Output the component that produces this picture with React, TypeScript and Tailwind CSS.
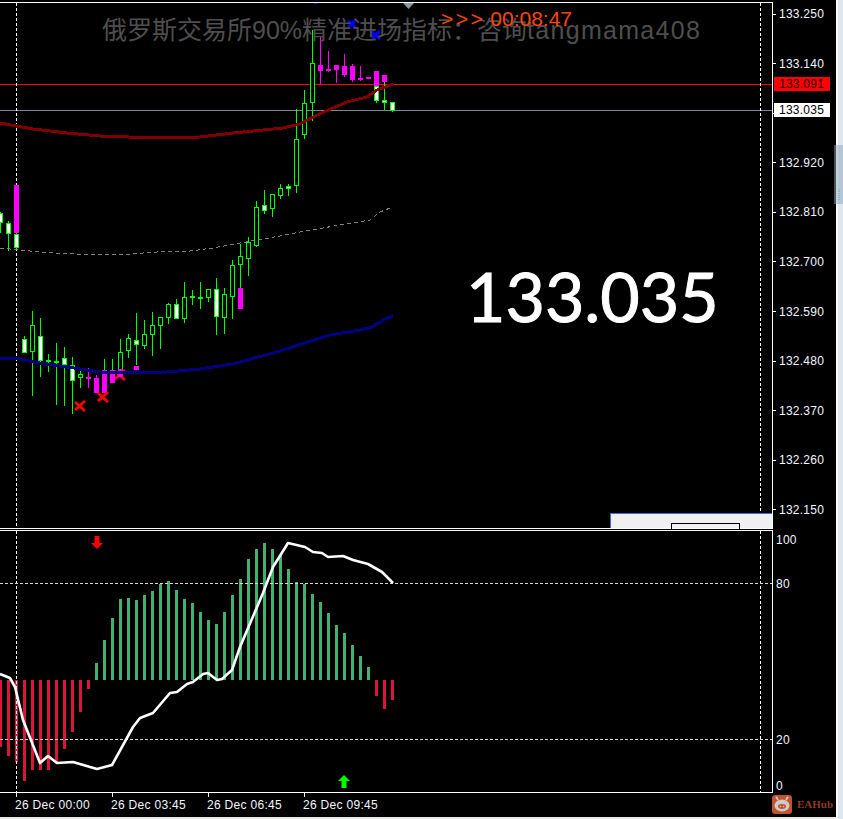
const GREEN = "#00ff00"
const MAGENTA = "#ff00ff"

type Kind = "g" | "w" | "d" | "m"
// k, high, body top, body bottom, low, kind
const candles: [number, number, number, number, number, Kind][] = [
  [0, 212, 213, 223, 233, "w"],
  [1, 221, 223, 234, 251, "w"],
  [2, 233, 234, 248, 249, "w"],
  [3, 336, 339, 353, 353, "w"],
  [4, 311, 325, 352, 396, "g"],
  [5, 318, 336, 361, 377, "w"],
  [6, 354, 360, 362, 372, "d"],
  [7, 343, 361, 363, 405, "d"],
  [8, 347, 358, 365, 406, "w"],
  [9, 357, 365, 381, 414, "w"],
  [10, 370, 374, 378, 388, "g"],
  [15, 339, 352, 370, 370, "g"],
  [16, 334, 338, 351, 358, "g"],
  [17, 313, 340, 345, 365, "w"],
  [18, 320, 334, 346, 349, "g"],
  [19, 312, 325, 335, 356, "g"],
  [20, 317, 317, 326, 349, "g"],
  [21, 303, 304, 318, 324, "g"],
  [22, 299, 304, 319, 319, "w"],
  [23, 282, 297, 319, 323, "g"],
  [24, 290, 296, 298, 305, "d"],
  [25, 282, 297, 299, 309, "d"],
  [26, 289, 289, 298, 302, "g"],
  [27, 278, 289, 317, 335, "w"],
  [28, 288, 294, 318, 334, "g"],
  [29, 260, 265, 297, 319, "g"],
  [30, 244, 256, 265, 288, "g"],
  [31, 237, 242, 259, 276, "g"],
  [32, 201, 207, 246, 247, "g"],
  [33, 190, 205, 211, 214, "w"],
  [34, 194, 194, 209, 217, "g"],
  [35, 184, 188, 196, 199, "g"],
  [36, 184, 186, 189, 196, "w"],
  [37, 109, 139, 186, 193, "g"],
  [38, 90, 103, 135, 139, "g"],
  [39, 30, 63, 103, 121, "g"],
  [47, 86, 86, 101, 103, "w"],
  [48, 82, 100, 103, 110, "w"],
  [49, 102, 102, 111, 112, "w"],
]

const bearCandles: [number, number, number, number, number][] = [
  [2, 185, 185, 233, 233],
  [11, 368, 377, 379, 388],
  [12, 375, 378, 393, 393],
  [13, 370, 370, 393, 393],
  [14, 370, 370, 383, 383],
  [15, 369, 369, 377, 377],
  [17, 366, 366, 370, 370],
  [30, 288, 288, 309, 309],
  [40, 37, 65, 71, 84],
  [41, 51, 69, 71, 72],
  [42, 65, 65, 70, 83],
  [43, 54, 66, 75, 77],
  [44, 64, 66, 80, 82],
  [45, 66, 78, 80, 81],
  [46, 77, 77, 79, 79],
  [47, 71, 71, 86, 86],
  [48, 75, 75, 82, 82],
]

const dashedMa = "0,248 30,251 53,253 77,254 130,254 157,252 190,251 213,248 240,243 280,236 300,232 340,225 370,220 380,212 390,208"
const redMa = "0,123 33,129 67,133 100,136 157,138 200,137 233,133 283,128 300,124 317,115 333,108 347,102 367,97 377,90 393,84"
const blueMa = "0,358 17,358 33,362 67,367 100,372 133,373 167,372 200,369 233,364 280,351 330,335 360,330 372,327 385,319 393,316"

// histogram ends, in the reference's y pixels
const redBars: [number, number][] = [
  [0, 747], [1, 756], [2, 762], [3, 781], [4, 770], [5, 770], [6, 770], [7, 762], [8, 749], [9, 732], [10, 712], [11, 689],
  [47, 696], [48, 709], [49, 700],
]
const greenTops = [
  663, 640, 618, 599, 598, 600, 595, 591, 584, 581, 590, 599, 603, 612, 620, 624, 612, 595, 579, 559, 549, 543, 549, 555, 569,
  582, 584, 594, 602, 613, 625, 633, 645, 656, 667,
]
const signalLine =
  "0,674 10,678 15,687 23,720 40,763 48,756 57,763 73,762 97,769 112,765 133,727 140,718 153,713 170,693 177,692 187,684 193,682 203,674 208,673 217,680 222,679 232,670 240,647 263,593 273,567 288,543 305,547 313,552 322,553 328,557 343,556 353,560 368,564 382,572 393,583"

const priceLabels = ["133.250", "133.140", "", "132.920", "132.810", "132.700", "132.590", "132.480", "132.370", "132.260", "132.150"]
const timeLabels = ["26 Dec 00:00", "26 Dec 03:45", "26 Dec 06:45", "26 Dec 09:45"]

function Candle({ k, high, top, bottom, low, kind }: { k: number; high: number; top: number; bottom: number; low: number; kind: Kind }) {
  const x = k * 8
  const h = bottom - top
  return (
    <g shapeRendering="crispEdges">
      <rect x={x} y={high} width={1} height={low - high} fill={GREEN} />
      {kind === "d" ? (
        <rect x={x - 2} y={top} width={5} height={h} fill={GREEN} />
      ) : (
        <rect x={x - 1.5} y={top + 0.5} width={4} height={h - 1} fill={kind === "w" ? "#fff" : "#000"} stroke={GREEN} />
      )}
    </g>
  )
}

function BearCandle({ k, high, top, bottom, low }: { k: number; high: number; top: number; bottom: number; low: number }) {
  const x = k * 8
  return (
    <g shapeRendering="crispEdges" fill={MAGENTA}>
      <rect x={x} y={high} width={1} height={low - high} />
      <rect x={x - 2} y={top} width={5} height={bottom - top} />
    </g>
  )
}

function Cross({ x, y, color, size }: { x: number; y: number; color: string; size: number }) {
  return (
    <path
      d={`M${x - size} ${y - size + 1} L${x + size} ${y + size} M${x + size} ${y - size} L${x - size} ${y + size - 1}`}
      stroke={color}
      strokeWidth={3}
      fill="none"
    />
  )
}

function Arrow({ x, y, up, color }: { x: number; y: number; up: boolean; color: string }) {
  // y is the tip of the arrow
  const d = up ? 1 : -1
  const pts = [
    [x, y],
    [x + 6, y + 6 * d],
    [x + 2.5, y + 6 * d],
    [x + 2.5, y + 13 * d],
    [x - 2.5, y + 13 * d],
    [x - 2.5, y + 6 * d],
    [x - 6, y + 6 * d],
  ]
  return <polygon points={pts.map((p) => p.join(",")).join(" ")} fill={color} />
}

function MainChart() {
  return (
    <svg viewBox="0 3 772 525" className="block h-[525px] w-[772px]">
      <rect x={0} y={84} width={772} height={1} fill="#ff0000" shapeRendering="crispEdges" />
      <rect x={0} y={110} width={772} height={1} fill="#778899" shapeRendering="crispEdges" />
      <g stroke="#fff" strokeDasharray="3 2" shapeRendering="crispEdges">
        <line x1={16.5} y1={3} x2={16.5} y2={528} />
        <line x1={760.5} y1={3} x2={760.5} y2={528} />
      </g>
      <polyline points={dashedMa} fill="none" stroke="#808080" strokeDasharray="4 3" shapeRendering="crispEdges" />
      <Cross x={120} y={375} color="#ff0000" size={5} />
      {candles.map(([k, high, top, bottom, low, kind]) => (
        <Candle key={`g${k}`} k={k} high={high} top={top} bottom={bottom} low={low} kind={kind} />
      ))}
      {bearCandles.map(([k, high, top, bottom, low]) => (
        <BearCandle key={`m${k}`} k={k} high={high} top={top} bottom={bottom} low={low} />
      ))}
      <rect x={104} y={359} width={1} height={11} fill={GREEN} shapeRendering="crispEdges" />
      <rect x={112} y={359} width={1} height={11} fill={GREEN} shapeRendering="crispEdges" />
      <polyline points={redMa} fill="none" stroke="#800000" strokeWidth={3} shapeRendering="crispEdges" />
      <polyline points={blueMa} fill="none" stroke="#000080" strokeWidth={3} shapeRendering="crispEdges" />
      <Cross x={80} y={406} color="#ff0000" size={5} />
      <Cross x={103} y={397} color="#ff0000" size={5} />
      <Cross x={352} y={24} color="#0000ff" size={4} />
      <Cross x={376} y={35} color="#0000ff" size={4} />
      <rect x={314} y={3} width={3} height={1} fill="#0000ff" />
      <polygon points="403,3 414,3 408.5,9" fill="#8a98a5" />
    </svg>
  )
}

function SubChart() {
  return (
    <svg viewBox="0 531 772 261" className="block h-[261px] w-[772px]">
      <g shapeRendering="crispEdges">
        {redBars.map(([k, end]) => (
          <rect key={k} x={k * 8 - 1} y={680} width={3} height={end - 680} fill="#dc143c" />
        ))}
        {greenTops.map((top, i) => (
          <rect key={i} x={(i + 12) * 8 - 1} y={top} width={3} height={680 - top} fill="#3cb371" />
        ))}
        <g stroke="#fff" strokeDasharray="3 2" strokeWidth={1}>
          <line x1={16.5} y1={531} x2={16.5} y2={792} />
          <line x1={760.5} y1={531} x2={760.5} y2={792} />
        </g>
        <g stroke="#d8d8d8" strokeDasharray="3 2" strokeWidth={1}>
          <line x1={0} y1={583.5} x2={772} y2={583.5} />
          <line x1={0} y1={739.5} x2={772} y2={739.5} />
        </g>
      </g>
      <polyline points={signalLine} fill="none" stroke="#fff" strokeWidth={2.6} strokeLinejoin="round" />
      <Arrow x={97} y={549} up={false} color="#ff0000" />
      <Arrow x={344} y={775} up color="#00ff00" />
    </svg>
  )
}

function PriceAxis() {
  return (
    <div className="relative w-[63px] pt-[5px]">
      <div className="flex flex-col gap-[35.6px]">
        {priceLabels.map((label, i) => (
          <div key={i} className="flex h-[14px] items-center">
            <div className="h-px w-[3px] bg-white" />
            <span className="ml-[3px] text-[12px] leading-[14px] tracking-[0.25px] text-[#f2f7ff]">{label}</span>
          </div>
        ))}
      </div>
      <div className="absolute left-[1px] top-[75px] flex h-[14px] w-[56px] items-center bg-[#ff0000] pl-[5px] text-[12px] tracking-[0.25px] text-[#200000]">
        133.091
      </div>
      <div className="absolute left-[1px] top-[101px] flex h-[14px] w-[56px] items-center bg-white pl-[5px] text-[12px] tracking-[0.25px] text-black">
        133.035
      </div>
    </div>
  )
}

function SubAxis() {
  return (
    <div className="flex w-[63px] flex-col pl-[3px] pt-[3px] text-[12px] leading-[14px] tracking-[0.25px] text-[#f2f7ff]">
      <span className="h-[14px]">100</span>
      <span className="mt-[30px] h-[14px]">80</span>
      <span className="mt-[142px] h-[14px]">20</span>
      <span className="mt-[32px] h-[14px]">0</span>
    </div>
  )
}

function PigLogo() {
  return (
    <svg viewBox="0 0 20 19" className="block h-[19px] w-[20px] shrink-0">
      <rect x={0} y={0} width={20} height={19} rx={3} fill="#bf5530" />
      <path d="M6 5 L4.5 2.5 M14 5 L15.5 2.5" stroke="#d9c9c2" strokeWidth={1.5} />
      <circle cx={4.5} cy={2.5} r={1} fill="#d9c9c2" />
      <circle cx={15.5} cy={2.5} r={1} fill="#d9c9c2" />
      <ellipse cx={10} cy={10.5} rx={7.5} ry={6} fill="#cfcac7" />
      <ellipse cx={10} cy={11.5} rx={4} ry={2.4} fill="#bf5530" />
      <circle cx={8.5} cy={11.5} r={0.7} fill="#cfcac7" />
      <circle cx={11.5} cy={11.5} r={0.7} fill="#cfcac7" />
    </svg>
  )
}

function TimeAxis() {
  return (
    <div className="flex h-[24px] w-[836px] pl-[16px]">
      {timeLabels.map((label) => (
        <div key={label} className="flex w-[96px] shrink-0 flex-col">
          <div className="h-[4px] w-px bg-white" />
          <span className="-ml-[1px] mt-[1px] whitespace-nowrap text-[12px] leading-[14px] tracking-[0.3px] text-[#f2f7ff]">{label}</span>
        </div>
      ))}
      <div className="ml-[372px] mt-[2px] flex h-[19px] shrink-0 items-center">
        <PigLogo />
        <span className="ml-[5px] font-['Liberation_Serif',serif] text-[11px] font-bold leading-none text-[#8f3b25]">EAHub</span>
      </div>
    </div>
  )
}

export default function App() {
  return (
    <div className="relative flex h-[819px] w-[843px] overflow-hidden bg-black pt-[2px] font-['Liberation_Sans',sans-serif]">
      <div className="flex w-[836px] flex-col">
        <div className="flex h-[527px]">
          <div className="relative w-[773px] border-b border-r border-t border-white">
            <MainChart />
            <div className="absolute left-[102px] top-[10px] whitespace-nowrap font-['Liberation_Sans','Noto_Sans_CJK_SC',sans-serif] text-[25px] leading-[34px] text-[#4e4e4e]">
              俄罗斯交易所90%精准进场指标：咨询<span className="tracking-[1.3px]">tangmama408</span>
            </div>
            <div className="absolute left-[441px] top-[3px] flex whitespace-nowrap text-[21px] leading-[26px] text-[#ff4500]">
              <span className="font-light tracking-[2.5px]">&gt;&gt;&gt;</span>
              <span className="ml-[5px]">00:08:47</span>
            </div>
            <div className="absolute left-[466px] top-[251px] whitespace-nowrap font-['Lato',sans-serif] text-[68px] leading-[84px] text-white [-webkit-text-stroke:1px_white]">
              133.035
            </div>
            <div className="absolute bottom-0 right-0 flex h-[15px] w-[162px] border-l border-t border-[#3b6fd6] bg-[#f0f0f0]">
              <div className="ml-[60px] mt-[9px] h-[6px] w-[69px] border-l border-r border-t border-black" />
            </div>
          </div>
          <PriceAxis />
        </div>
        <div className="mt-px flex h-[263px]">
          <div className="w-[773px] border-b border-r border-t border-white">
            <SubChart />
          </div>
          <SubAxis />
        </div>
        <TimeAxis />
        <div className="h-[2px] w-[836px] bg-[#e8e8e8]" />
      </div>
      <div className="-mt-[2px] flex w-[7px] border-l-2 border-white bg-[#dde7f0]" />
      <div className="absolute left-[834px] top-[145px] flex h-[59px] w-[9px] flex-col justify-end gap-[1px] bg-[#8fa5b8]/50 pb-[4px] pl-[4px]">
        <div className="h-[1px] w-[2px] bg-[#6fc4e0]" />
        <div className="h-[1px] w-[2px] bg-[#6fc4e0]" />
        <div className="h-[1px] w-[2px] bg-[#6fc4e0]" />
        <div className="h-[1px] w-[2px] bg-[#6fc4e0]" />
        <div className="h-[1px] w-[2px] bg-[#6fc4e0]" />
        <div className="h-[1px] w-[2px] bg-[#6fc4e0]" />
      </div>
    </div>
  )
}
